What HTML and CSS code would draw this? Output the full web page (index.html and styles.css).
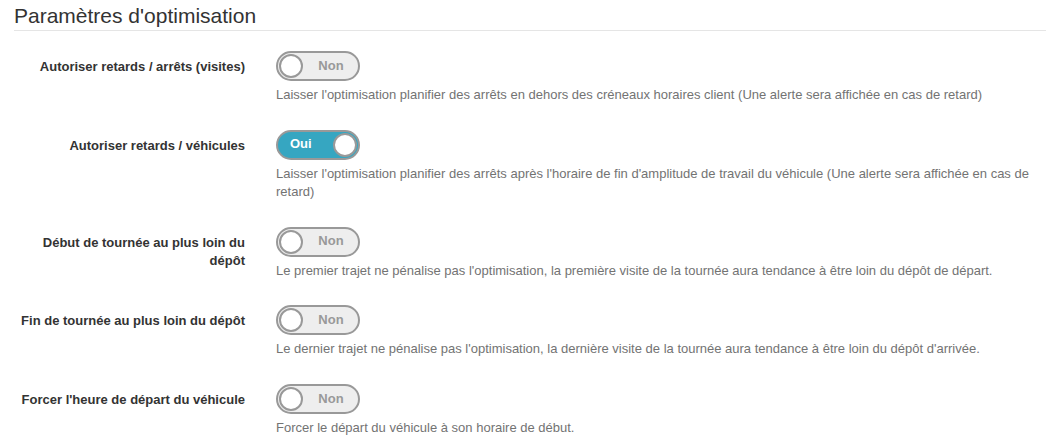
FILE: index.html
```html
<!DOCTYPE html>
<html lang="fr">
<head>
<meta charset="utf-8">
<link rel="stylesheet" href="styles.css">
</head>
<body>
<form class="settings">
  <div class="legend">Paramètres d'optimisation</div>

  <div class="group">
    <label class="label">Autoriser retards / arrêts (visites)</label>
    <div class="field">
      <div class="toggle off"><span class="knob"></span><span class="text">Non</span></div>
      <p class="help">Laisser l'optimisation planifier des arrêts en dehors des créneaux horaires client (Une alerte sera affichée en cas de retard)</p>
    </div>
  </div>

  <div class="group">
    <label class="label">Autoriser retards / véhicules</label>
    <div class="field">
      <div class="toggle on"><span class="text">Oui</span><span class="knob"></span></div>
      <p class="help">Laisser l'optimisation planifier des arrêts après l'horaire de fin d'amplitude de travail du véhicule (Une alerte sera affichée en cas de retard)</p>
    </div>
  </div>

  <div class="group">
    <label class="label">Début de tournée au plus loin du dépôt</label>
    <div class="field">
      <div class="toggle off"><span class="knob"></span><span class="text">Non</span></div>
      <p class="help">Le premier trajet ne pénalise pas l'optimisation, la première visite de la tournée aura tendance à être loin du dépôt de départ.</p>
    </div>
  </div>

  <div class="group">
    <label class="label">Fin de tournée au plus loin du dépôt</label>
    <div class="field">
      <div class="toggle off"><span class="knob"></span><span class="text">Non</span></div>
      <p class="help">Le dernier trajet ne pénalise pas l'optimisation, la dernière visite de la tournée aura tendance à être loin du dépôt d'arrivée.</p>
    </div>
  </div>

  <div class="group">
    <label class="label">Forcer l'heure de départ du véhicule</label>
    <div class="field">
      <div class="toggle off"><span class="knob"></span><span class="text">Non</span></div>
      <p class="help">Forcer le départ du véhicule à son horaire de début.</p>
    </div>
  </div>
</form>
</body>
</html>
```
FILE: styles.css
```css
html, body {
  margin: 0;
  padding: 0;
  background: #fff;
}
body {
  font-family: "Liberation Sans", Arial, sans-serif;
  font-size: 13px;
  line-height: 1.42857;
  color: #333;
  width: 1046px;
  overflow: hidden;
}
.settings {
  padding: 0 15px 0 14px;
}
.legend {
  font-size: 21px;
  line-height: 29px;
  padding-top: 1px;
  color: #333;
  border-bottom: 1px solid #e5e5e5;
  margin: 0 -15px 20px 0;
}
.group {
  display: grid;
  grid-template-columns: 231px 1fr;
  column-gap: 31px;
  margin-bottom: 15px;
}
.label {
  font-weight: bold;
  text-align: right;
  padding-top: 7px;
  color: #333;
}
.field {
  display: flex;
  flex-direction: column;
  align-items: flex-start;
}
.toggle {
  box-sizing: border-box;
  width: 84px;
  height: 30px;
  border: 2px solid #999;
  border-radius: 15px;
  display: flex;
  align-items: center;
  padding: 0 1px;
  font-weight: bold;
}
.toggle.off {
  background: #eee;
  color: #999;
}
.toggle.on {
  background: #36a6c1;
  color: #fff;
}
.knob {
  box-sizing: border-box;
  width: 24px;
  height: 24px;
  border-radius: 50%;
  border: 2px solid #999;
  background: #fff;
  flex: none;
}
.toggle.off .text {
  flex: 1;
  text-align: center;
  padding-left: 2px;
}
.toggle.on .text {
  flex: 1;
  padding-left: 11px;
}
.help {
  margin: 5px 0 10px;
  color: #737373;
}
```
